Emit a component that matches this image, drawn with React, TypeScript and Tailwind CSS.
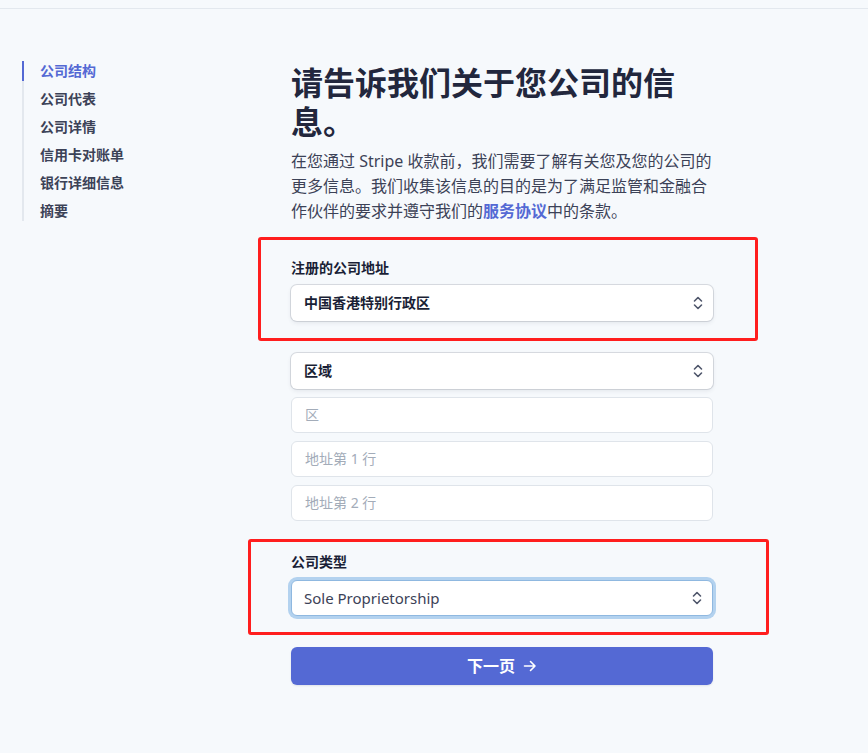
const navItems = ["公司结构", "公司代表", "公司详情", "信用卡对账单", "银行详细信息", "摘要"];

function Chevrons() {
  return (
    <svg width="10" height="16" viewBox="0 0 10 16" fill="none" className="shrink-0">
      <path d="M1.5 6 L5 2.5 L8.5 6" stroke="#4f566b" strokeWidth="1.6" strokeLinecap="round" strokeLinejoin="round" />
      <path d="M1.5 10 L5 13.5 L8.5 10" stroke="#4f566b" strokeWidth="1.6" strokeLinecap="round" strokeLinejoin="round" />
    </svg>
  );
}

function SelectBox({ value, focused, bold = true }: { value: string; focused?: boolean; bold?: boolean }) {
  return (
    <div
      className={
        focused
          ? "flex h-9 w-[422px] items-center justify-between rounded-md border border-[#8fb8e0] bg-white pl-[12px] pr-[10px] ring-[3px] ring-[#b3d2ef]"
          : "flex h-9 w-[422px] items-center justify-between rounded-md bg-white pl-[13px] pr-[10px] shadow-[0_0_0_1px_rgba(60,66,87,0.16),0_2px_4px_rgba(60,66,87,0.10)]"
      }
    >
      <span className={bold ? "text-sm font-semibold text-[#1a1f36]" : "text-[15px] text-[#3c4257]"}>{value}</span>
      <Chevrons />
    </div>
  );
}

function TextBox({ placeholder }: { placeholder: string }) {
  return (
    <div className="flex h-9 w-[422px] items-center rounded-md border border-[#dfe4ea] bg-white pl-[13px] text-sm text-[#a3acb9]">
      {placeholder}
    </div>
  );
}

export default function App() {
  return (
    <div
      className="min-h-screen bg-[#f6f9fc]"
      style={{ fontFamily: '"Noto Sans", "Noto Sans CJK SC", sans-serif' }}
    >
      <div className="h-[9px] border-b border-[#e3e8ee]" />
      <div className="flex pl-[22px] pt-[52px]">
        <aside className="w-[269px] shrink-0">
          <ul className="flex flex-col gap-2 border-l-2 border-[#e3e8ee]">
            {navItems.map((item, i) => (
              <li
                key={item}
                className={
                  i === 0
                    ? "-ml-[2px] h-5 border-l-2 border-[#5469d4] pl-4 text-sm leading-5 font-semibold text-[#5469d4]"
                    : "h-5 pl-4 text-sm leading-5 font-semibold text-[#3c4257]"
                }
              >
                {item}
              </li>
            ))}
          </ul>
        </aside>

        <main className="w-[422px]">
          <h1 className="mt-[2px] text-[32px] leading-[39px] font-bold text-[#22273d]">
            请告诉我们关于您公司的信息。
          </h1>
          <p className="mt-2 text-base leading-[25px] text-[#3c4257]">
            在您通过 Stripe 收款前，我们需要了解有关您及您的公司的更多信息。我们收集该信息的目的是为了满足监管和金融合作伙伴的要求并遵守我们的
            <span className="font-semibold text-[#5469d4]">服务协议</span>中的条款。
          </p>

          <div className="-ml-[33px] mt-[13px] w-[500px] rounded-[3px] border-[3px] border-[#ff1e1e] pb-[17px] pl-[30px] pt-[18px]">
            <div className="mb-[7px] text-sm leading-5 font-semibold text-[#1a1f36]">注册的公司地址</div>
            <SelectBox value="中国香港特别行政区" />
          </div>

          <div className="mt-3 flex flex-col gap-2">
            <SelectBox value="区域" />
            <TextBox placeholder="区" />
            <TextBox placeholder="地址第 1 行" />
            <TextBox placeholder="地址第 2 行" />
          </div>

          <div className="-ml-[43px] mt-[18px] w-[521px] rounded-[3px] border-[3px] border-[#ff1e1e] pb-4 pl-[40px] pt-[10px]">
            <div className="mb-2 text-sm leading-5 font-semibold text-[#1a1f36]">公司类型</div>
            <SelectBox value="Sole Proprietorship" focused bold={false} />
          </div>

          <button
            type="button"
            className="mt-3 flex h-[38px] w-[422px] items-center justify-center gap-2 rounded-md bg-[#5469d4] text-base font-semibold text-white shadow-[0_1px_2px_rgba(60,66,87,0.12)]"
          >
            <span>下一页</span>
            <svg width="14" height="14" viewBox="0 0 14 14" fill="none">
              <path d="M1.5 7 H12 M7.5 2.5 L12 7 L7.5 11.5" stroke="white" strokeWidth="1.6" strokeLinecap="round" strokeLinejoin="round" />
            </svg>
          </button>
        </main>
      </div>
    </div>
  );
}
